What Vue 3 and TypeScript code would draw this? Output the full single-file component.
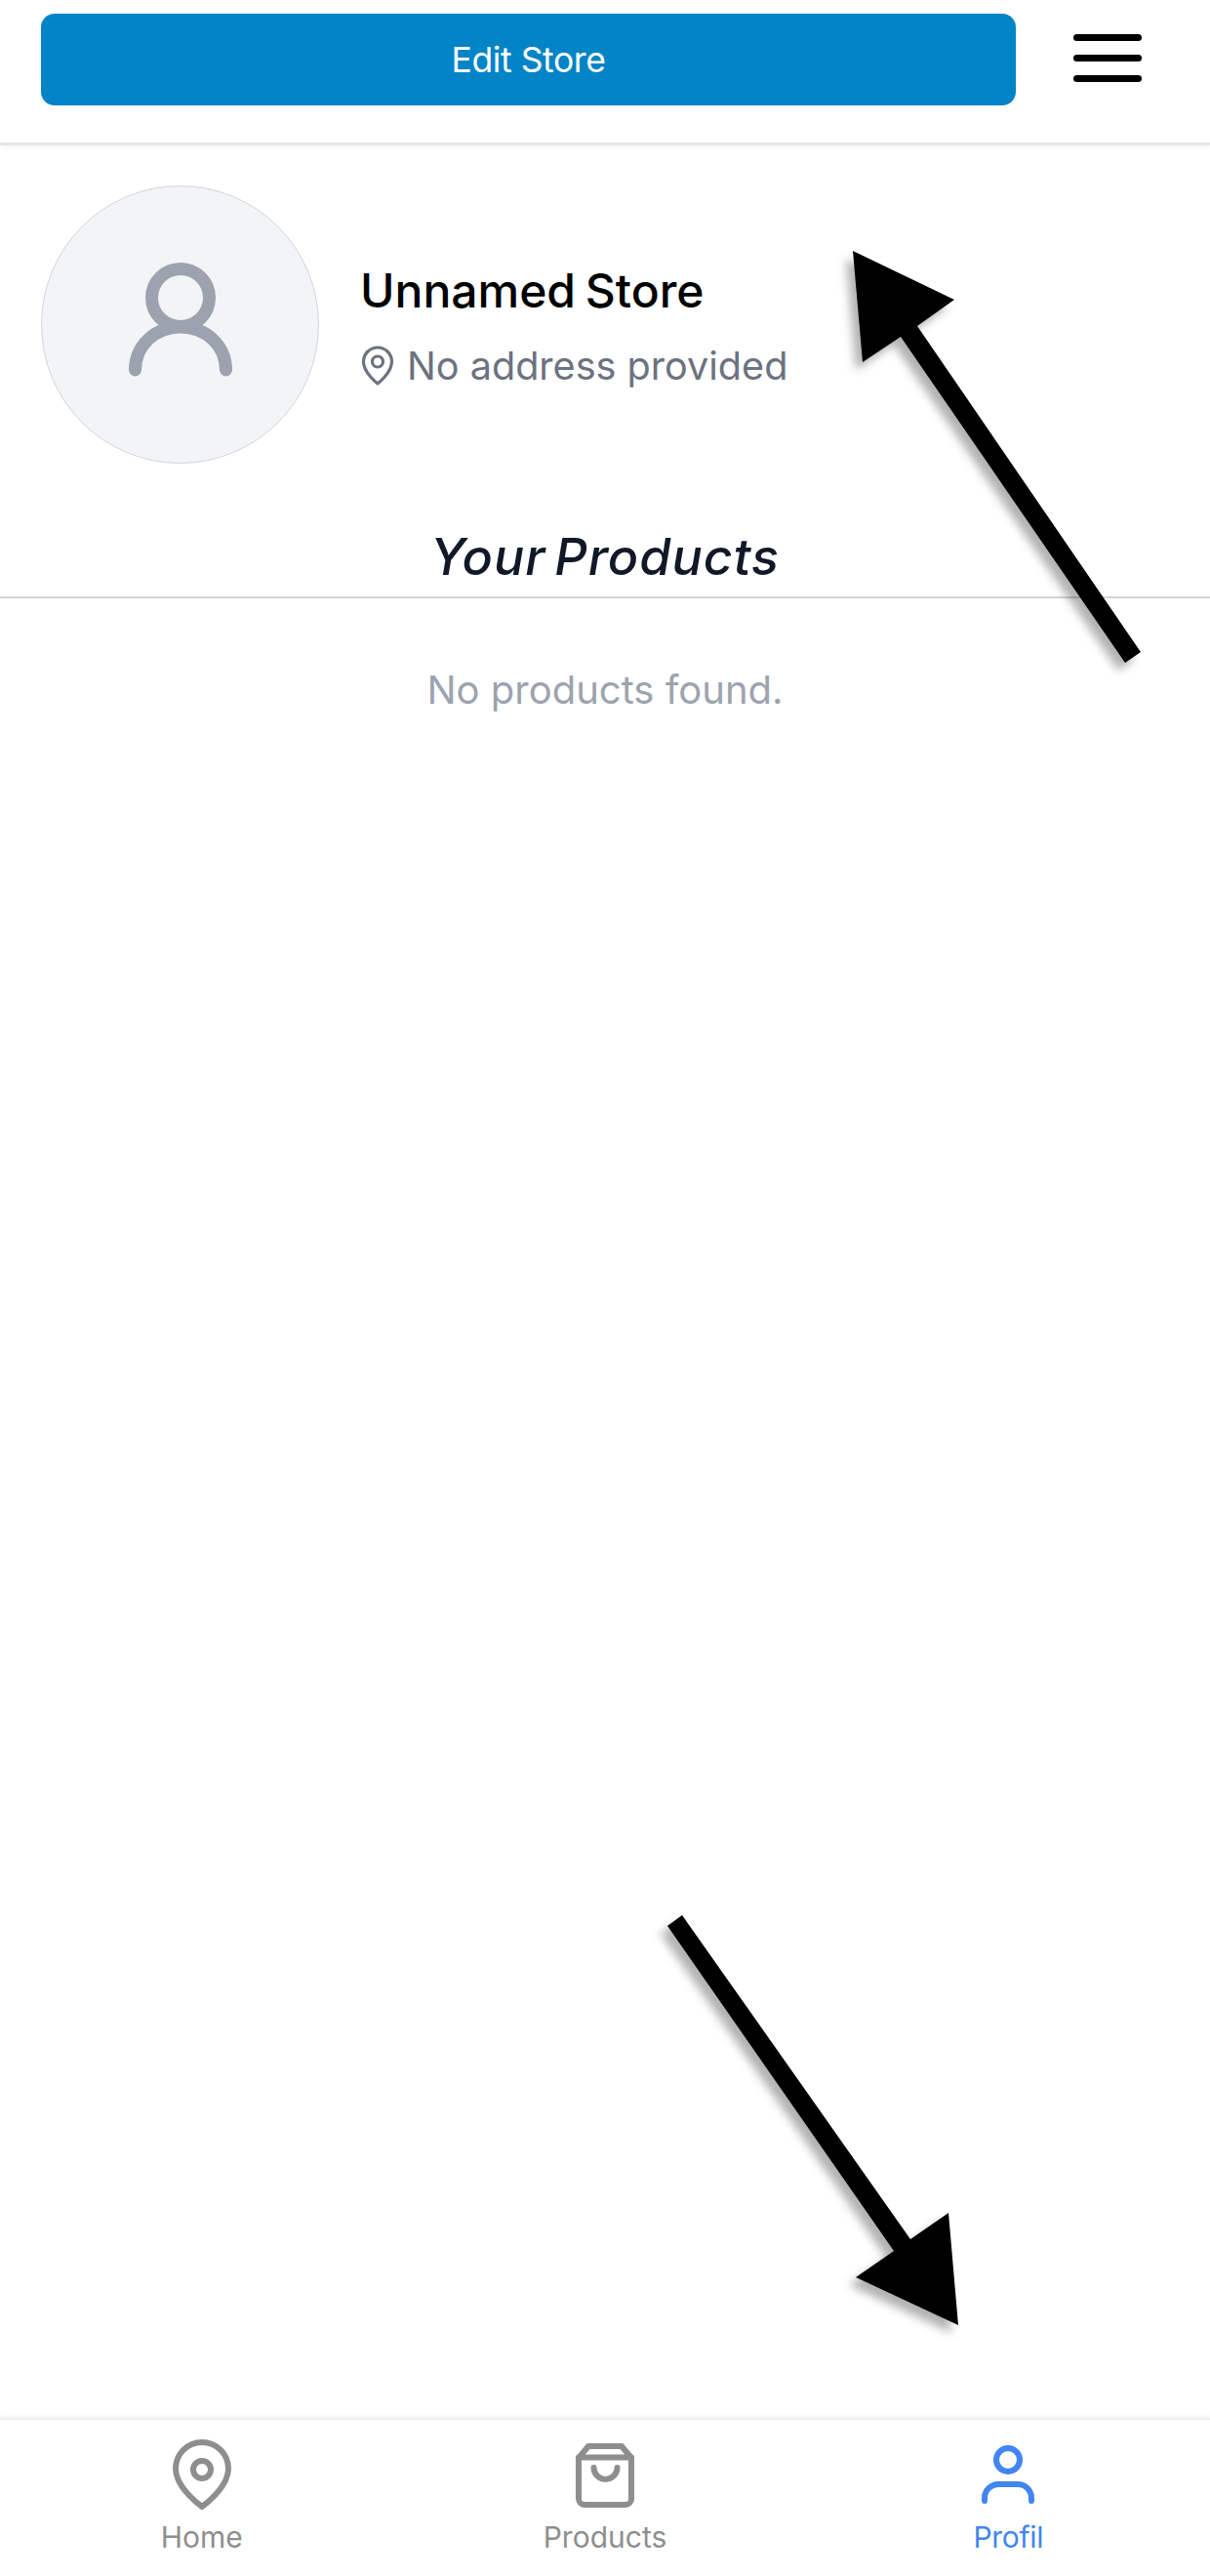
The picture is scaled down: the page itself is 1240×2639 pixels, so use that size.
<script setup lang="ts">
const storeName = "Unnamed Store"
const storeAddress = "No address provided"
</script>

<template>
  <div class="page">
    <header class="top-bar">
      <button class="edit-btn">Edit Store</button>
      <div class="burger">
        <span></span>
        <span></span>
        <span></span>
      </div>
    </header>

    <main class="content">
      <section class="store">
        <div class="avatar">
          <svg class="avatar-icon" viewBox="0 0 120 120" fill="none" stroke="#9ca3af" stroke-width="13" stroke-linecap="round">
            <circle cx="60" cy="43" r="29.5" />
            <path d="M13.5 117C13.5 92 34 73 60 73S106.500 92 106.500 117" />
          </svg>
        </div>
        <div class="store-info">
          <h1 class="store-name">{{ storeName }}</h1>
          <div class="store-address">
            <svg class="small-pin" viewBox="0 0 34 42" fill="none" stroke="#6b7280" stroke-width="3.200">
              <path d="M17 39C17 39 2.500 28 2.500 16.500A14.500 14.500 0 0 1 31.500 16.500C31.500 28 17 39 17 39Z" stroke-linejoin="round" />
              <circle cx="17" cy="16.500" r="5.500" />
            </svg>
            <span>{{ storeAddress }}</span>
          </div>
        </div>
      </section>

      <h2 class="section-title">Your Products</h2>
      <p class="empty">No products found.</p>
    </main>

    <nav class="bottom-nav">
      <div class="nav-item">
        <svg class="nav-icon" viewBox="0 0 72 80" fill="none" stroke="#8e8e8e" stroke-width="6" stroke-linejoin="round">
          <path d="M36 73C36 73 9 54 9 34A27 27 0 0 1 63 34C63 54 36 73 36 73Z" />
          <circle cx="36" cy="35" r="9" />
        </svg>
        <span>Home</span>
      </div>
      <div class="nav-item">
        <svg class="nav-icon" viewBox="0 0 72 80" fill="none" stroke="#8e8e8e" stroke-width="6" stroke-linejoin="round" stroke-linecap="round">
          <path d="M19 11H53L63 23V65A6 6 0 0 1 57 71H15A6 6 0 0 1 9 65V23Z" />
          <path d="M9 22.500H63" />
          <path d="M24.500 33A12 12 0 0 0 48.500 33" />
        </svg>
        <span>Products</span>
      </div>
      <div class="nav-item active">
        <svg class="nav-icon" viewBox="0 0 72 80" fill="none" stroke="#4285f0" stroke-width="6" stroke-linecap="round">
          <circle cx="36" cy="25" r="12" />
          <path d="M12 67V64A14 14 0 0 1 26 50H46A14 14 0 0 1 60 64V67" />
        </svg>
        <span>Profil</span>
      </div>
    </nav>

    <!-- annotation arrows drawn over the screenshot -->
    <svg class="arrows" viewBox="0 0 1240 2639">
      <polygon points="874,257 978,307 940,334 1169,668 1153,679 923,345 884,371" />
      <polygon points="684,1973 699,1962 933,2294 972,2267 982,2382 877,2333 916,2306" />
    </svg>
  </div>
</template>

<style>
html,
body {
  background: #fff;
}
</style>

<style scoped>
.page {
  position: relative;
  height: 2639px;
  display: flex;
  flex-direction: column;
  background: #fff;
  font-family: Inter, "Liberation Sans", sans-serif;
  overflow: hidden;
}
.top-bar {
  height: 146px;
  box-sizing: content-box;
  padding: 0 70px 0 42px;
  display: flex;
  justify-content: space-between;
  align-items: flex-start;
  border-bottom: 3px solid #e5e7eb;
  box-shadow: 0 2px 4px rgba(0, 0, 0, 0.05);
}
.edit-btn {
  width: 999px;
  height: 94px;
  margin-top: 14px;
  border: none;
  border-radius: 14px;
  background: #0284c7;
  color: #fff;
  font-family: inherit;
  font-size: 35.500px;
  letter-spacing: -0.4px;
}
.burger {
  width: 70px;
  margin-top: 35px;
  display: flex;
  flex-direction: column;
  gap: 14px;
}
.burger span {
  height: 7px;
  border-radius: 4px;
  background: #000;
}
.content {
  flex: 1;
}
.store {
  display: flex;
  align-items: center;
  gap: 42px;
  padding: 41px 42px 0;
}
.avatar {
  width: 285px;
  height: 285px;
  box-sizing: border-box;
  flex-shrink: 0;
  display: flex;
  align-items: center;
  justify-content: center;
  border-radius: 50%;
  border: 1.5px solid #d1d5db;
  background: #f3f4f6;
}
.avatar-icon {
  width: 120px;
  height: 120px;
  overflow: visible;
  margin-bottom: 22px;
}
.store-info {
  display: flex;
  flex-direction: column;
  gap: 24px;
  margin-top: 5px;
}
.store-name {
  margin: 0;
  font-size: 48px;
  font-weight: 500;
  line-height: 56px;
  color: #000;
  word-spacing: -3px;
}
.store-address {
  display: flex;
  align-items: center;
  gap: 13px;
  font-size: 39.600px;
  line-height: 50px;
  color: #6b7280;
}
.small-pin {
  width: 34px;
  height: 42px;
  margin-left: 1px;
  flex-shrink: 0;
}
.section-title {
  margin: 65px 0 0;
  height: 71px;
  line-height: 62px;
  text-align: center;
  font-size: 52px;
  font-weight: 500;
  font-style: italic;
  letter-spacing: 1px;
  color: #111827;
  word-spacing: -6px;
  border-bottom: 2.500px solid #d1d5db;
}
.empty {
  margin: 69px 0 0;
  text-align: center;
  font-size: 40px;
  line-height: 50px;
  color: #9ca3af;
}
.bottom-nav {
  height: 160px;
  display: grid;
  grid-template-columns: repeat(3, 1fr);
  border-top: 2px solid #eeeeee;
  box-shadow: 0 -2px 5px rgba(0, 0, 0, 0.04);
}
.nav-item {
  display: flex;
  flex-direction: column;
  align-items: center;
  padding-top: 16px;
  color: #8e8e8e;
  font-size: 30px;
  line-height: 36px;
}
.nav-item.active {
  color: #4285f0;
  letter-spacing: -0.3px;
}
.nav-icon {
  width: 72px;
  height: 80px;
  margin-bottom: 6px;
}
.arrows {
  position: absolute;
  top: 0;
  left: 0;
  width: 1240px;
  height: 2639px;
  pointer-events: none;
}
.arrows polygon {
  fill: #000;
  filter: drop-shadow(-7px 8px 5px rgba(0, 0, 0, 0.3));
}
</style>
